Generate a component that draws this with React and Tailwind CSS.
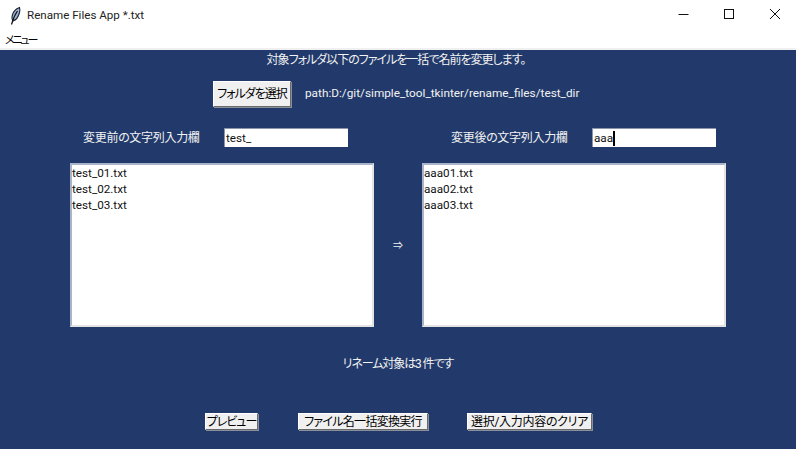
const font = { fontFamily: 'Roboto, "Noto Sans CJK JP", sans-serif' };

function TkButton({ className, children }) {
  return (
    <button className={`flex items-center justify-center whitespace-nowrap bg-[#f0f0f0] text-[12px] text-black border border-t-white border-l-white border-r-[#696969] border-b-[#696969] shadow-[1px_1px_0_#8a8f99] ${className}`}>
      {children}
    </button>
  );
}

function FileList({ files }) {
  return (
    <div className="w-[304px] h-[164px] bg-white border-2 border-[#a9b3c9] border-r-[#e3e3e3] border-b-[#e3e3e3] text-[11.7px] leading-[16px] text-[#111]">
      {files.map((f) => (
        <div key={f}>{f}</div>
      ))}
    </div>
  );
}

export default function App() {
  return (
    <div className="w-[796px] h-[449px] overflow-hidden flex flex-col bg-[#223a6b] [font-feature-settings:'palt']" style={font}>
      {/* title bar */}
      <div className="h-[31px] bg-white flex items-center shrink-0">
        <svg className="ml-[8px] w-[16px] h-[20px]" viewBox="0 0 16 20">
          <path d="M11.5 1.5C7.5 3 4.5 7 4 11c-.2 1.6.2 3 1 4 3-1 5.5-4.5 6.5-8.5.4-1.8.5-3.5 0-5z" fill="#9db4d6" stroke="#1a2433" strokeWidth="1.1" />
          <path d="M9.5 5C7 8.5 5 13 3.5 18.5" fill="none" stroke="#111" strokeWidth="1.2" />
        </svg>
        <span className="ml-[3px] text-[11.6px] text-[#222]">Rename Files App *.txt</span>
        <div className="ml-auto flex items-center">
          <svg className="w-[46px] h-[15px]" viewBox="0 0 46 15"><path d="M19.5 6.5h10" stroke="#111" strokeWidth="1" /></svg>
          <svg className="w-[46px] h-[15px]" viewBox="0 0 46 15"><rect x="19.5" y="1.5" width="9" height="9" fill="none" stroke="#111" strokeWidth="1" /></svg>
          <svg className="w-[46px] h-[15px] mr-[-1px]" viewBox="0 0 46 15"><path d="M19 1l10 10M29 1l-10 10" stroke="#111" strokeWidth="1" /></svg>
        </div>
      </div>

      {/* menu */}
      <div className="h-[19px] bg-white border-b-2 border-[#f0f0f0] shrink-0 pl-[5px] text-[11px] leading-[19px] tracking-[-2.2px] text-black">メニュー</div>

      {/* body */}
      <div className="flex-1 flex flex-col text-[12px] text-[#f2f2f2]">
        <div className="h-[21px] leading-[21px] text-center pr-[4px] tracking-[-1px]">対象フォルダ以下のファイルを一括で名前を変更します。</div>

        <div className="mt-[10px] h-[26px] flex items-center pl-[213px]">
          <TkButton className="w-[78px] h-[26px] tracking-[-1px]">フォルダを選択</TkButton>
          <span className="ml-[14px] text-[11.8px]">path:D:/git/simple_tool_tkinter/rename_files/test_dir</span>
        </div>

        <div className="mt-[21px] h-[19px] flex items-center">
          <span className="ml-[83px] w-[141px] tracking-[-0.3px]">変更前の文字列入力欄</span>
          <div className="w-[124px] h-[19px] bg-white pl-px text-[11.7px] leading-[19px] text-[#111] border-t border-l border-[#8a94ad]">test_</div>
          <span className="ml-[103px] w-[141px] tracking-[-0.3px]">変更後の文字列入力欄</span>
          <div className="w-[124px] h-[19px] bg-white pl-px text-[11.7px] leading-[19px] text-[#111] border-t border-l border-[#8a94ad] flex items-center">
            aaa
            <span className="w-[2px] h-[15px] bg-black" />
          </div>
        </div>

        <div className="mt-[16px] flex items-center pl-[70px]">
          <FileList files={['test_01.txt', 'test_02.txt', 'test_03.txt']} />
          <span className="w-[48px] text-center text-[10px]">⇒</span>
          <FileList files={['aaa01.txt', 'aaa02.txt', 'aaa03.txt']} />
        </div>

        <div className="mt-[28px] h-[18px] leading-[18px] text-center tracking-[-1.1px]">リネーム対象は3 件です</div>

        <div className="mt-[40px] flex items-center pl-[205px]">
          <TkButton className="w-[53px] h-[17px] tracking-[-1px]">プレビュー</TkButton>
          <TkButton className="ml-[40px] w-[130px] h-[17px] tracking-[-0.7px]">ファイル名一括変換実行</TkButton>
          <TkButton className="ml-[39px] w-[125px] h-[17px] tracking-[-0.3px]">選択/入力内容のクリア</TkButton>
        </div>
      </div>
    </div>
  );
}
